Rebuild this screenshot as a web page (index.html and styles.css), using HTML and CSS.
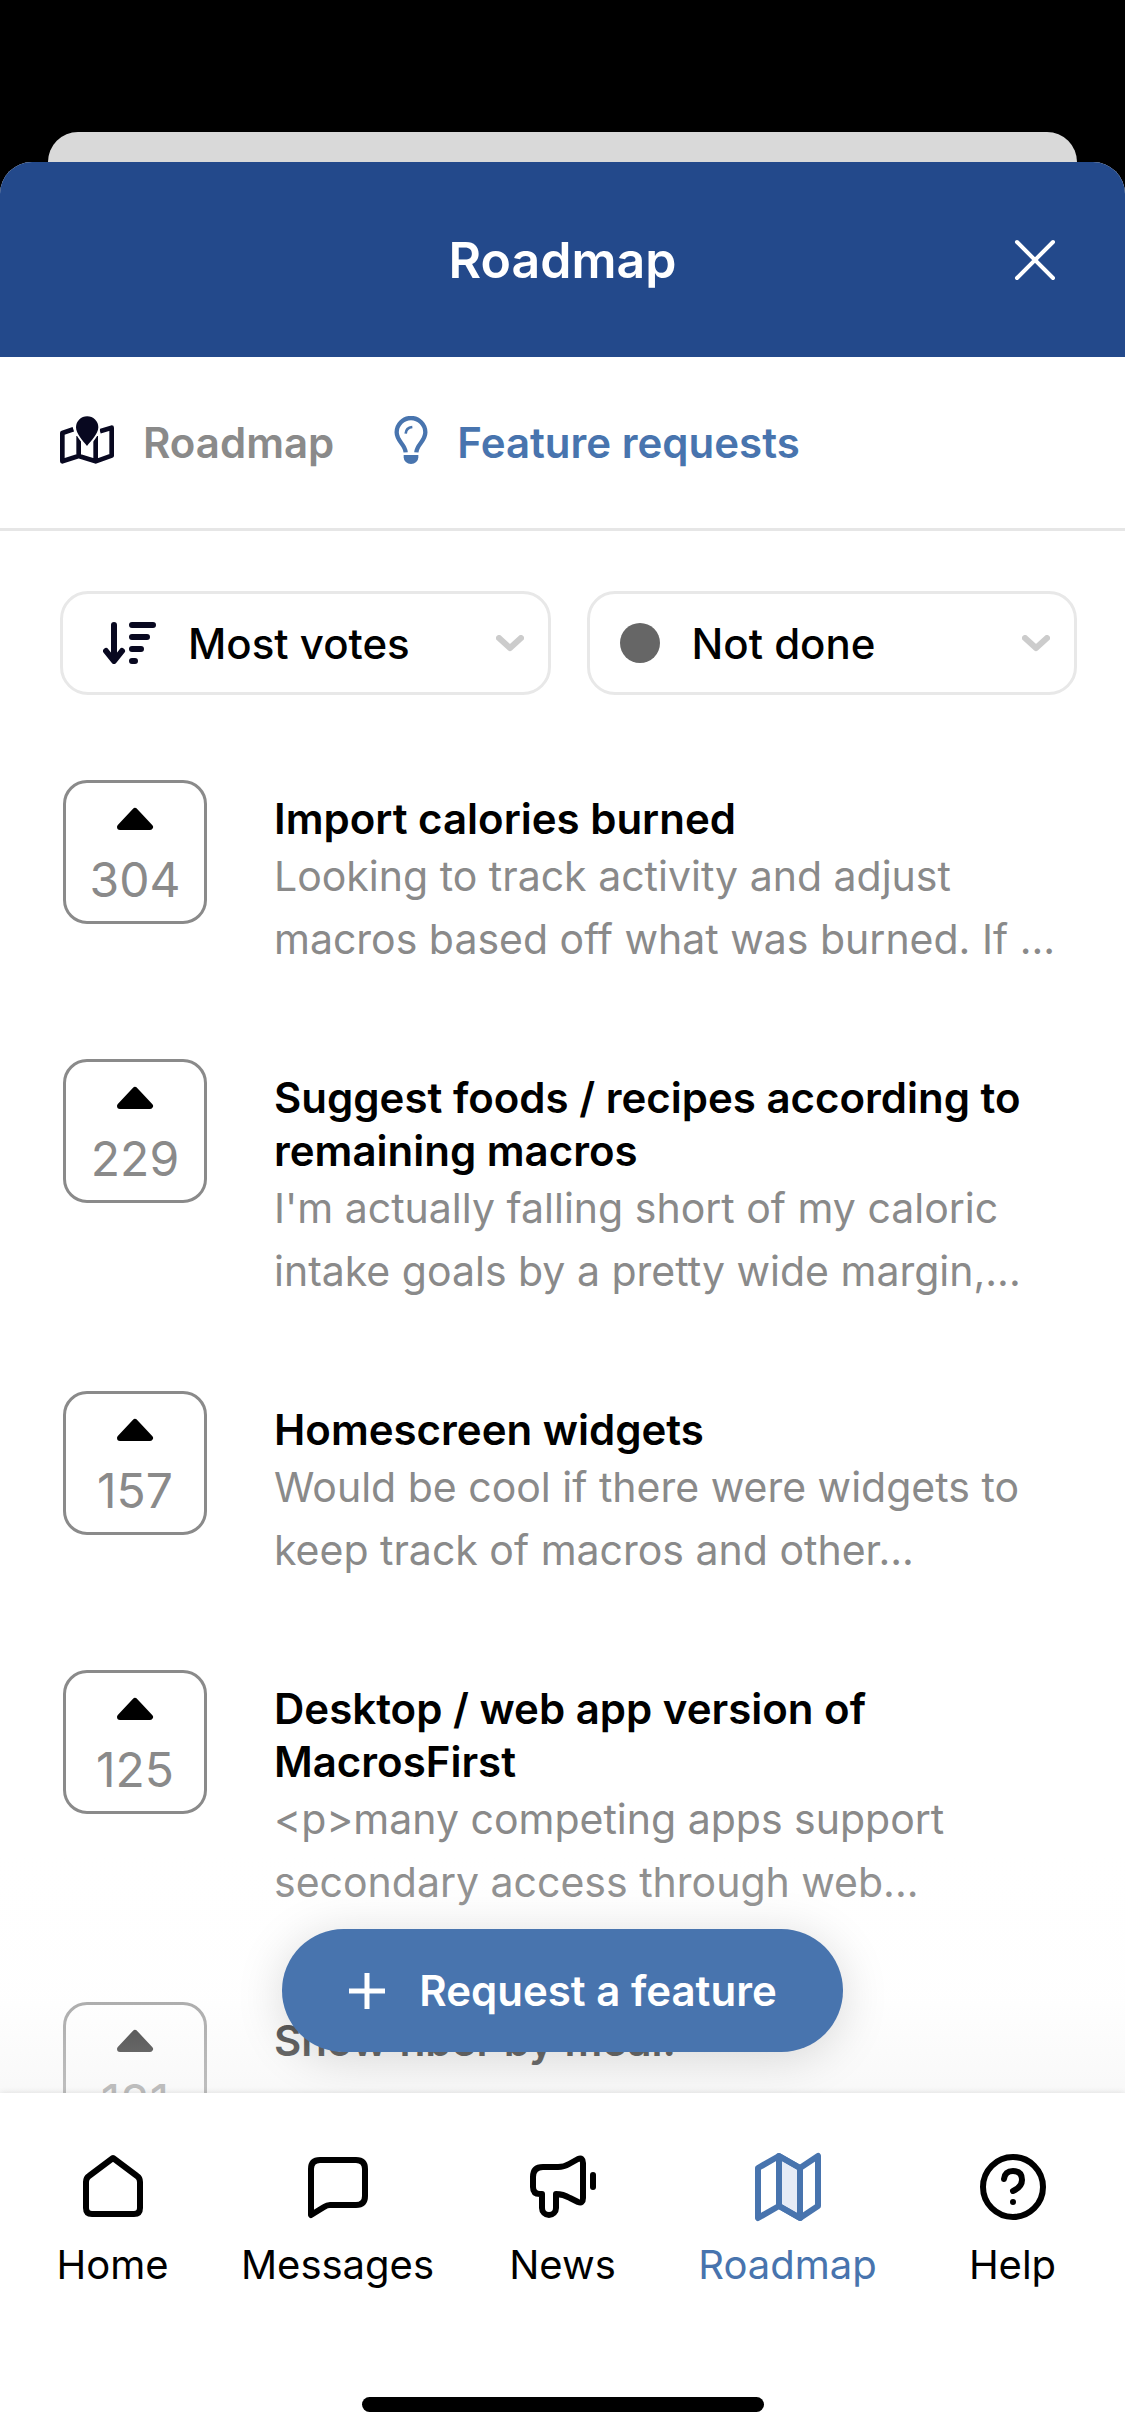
FILE: index.html
```html
<!DOCTYPE html>
<html lang="en">

<head>
    <meta charset="utf-8">
    <title>Roadmap</title>
    <meta name="viewport" content="width=device-width, initial-scale=1">

    <link rel="stylesheet" href="styles.css">
</head>

<body>
    <div class="backdrop"></div>

    <div class="sheet">
        <header class="header">
            <h1>Roadmap</h1>
            <button class="close" type="button" aria-label="Close">
                <svg width="42" height="42" viewBox="0 0 42 42" fill="none" stroke="currentColor" stroke-width="4" stroke-linecap="round">
                    <path d="M3 3L39 39M39 3L3 39" />
                </svg>
            </button>
        </header>

        <nav class="tabs">
            <a class="tab" href="#roadmap">
                <svg width="54" height="48" viewBox="0 0 162 144" fill="none" stroke="#080820" stroke-width="14" stroke-linejoin="round">
                    <path d="M40 40L7 51V136L56 120L107 136L155 119V35L120 46M56 60V120M107 60V136" />
                    <path d="M81 90C70 76 48 54 48 34a33 33 0 0 1 67 0C115 54 92 76 81 90z" fill="#080820" stroke="#fff" stroke-width="12" paint-order="stroke" />
                </svg>
                Roadmap
            </a>
            <a class="tab active" href="#requests">
                <svg width="34" height="48" viewBox="0 0 100 144" fill="none" stroke="currentColor" stroke-width="13">
                    <path d="M34 109C32 84 7 76 7 49a43 43 0 0 1 86 0C93 76 68 84 66 109" />
                    <path d="M34 53Q35 35 54 33" stroke-width="8" />
                    <path d="M28 117H72V124a22 20 0 0 1-44 0z" fill="currentColor" stroke="none" />
                </svg>
                Feature requests
            </a>
        </nav>

        <main class="content">
            <div class="filters">
                <label class="filter filter-sort">
                    <svg width="53" height="42" viewBox="0 0 53 42" fill="none" stroke="#080820" stroke-width="6" stroke-linecap="round" stroke-linejoin="round">
                        <path d="M11 3V38M3 29L11 39L19 29" />
                        <path d="M29 3H50M29 15H44M29 27H38M29 39H32" />
                    </svg>
                    <select aria-label="Sort by">
                        <option>Most votes</option>
                        <option>Newest</option>
                    </select>
                    <svg class="chevron" width="28" height="17" viewBox="0 0 28 17">
                        <path d="M3 3L14 13L25 3" />
                    </svg>
                </label>
                <label class="filter filter-status">
                    <span class="dot"></span>
                    <select aria-label="Status">
                        <option>Not done</option>
                        <option>Done</option>
                    </select>
                    <svg class="chevron" width="28" height="17" viewBox="0 0 28 17">
                        <path d="M3 3L14 13L25 3" />
                    </svg>
                </label>
            </div>

            <article class="item">
                <button class="vote" type="button">
                    <svg width="38" height="24" viewBox="0 0 38 24"><path d="M4 20L19 4L34 20z" /></svg>
                    304
                </button>
                <div class="text">
                    <h2>Import calories burned</h2>
                    <p>Looking to track activity and adjust macros based off what was burned. If ...</p>
                </div>
            </article>

            <article class="item">
                <button class="vote" type="button">
                    <svg width="38" height="24" viewBox="0 0 38 24"><path d="M4 20L19 4L34 20z" /></svg>
                    229
                </button>
                <div class="text">
                    <h2>Suggest foods / recipes according to remaining macros</h2>
                    <p>I'm actually falling short of my caloric intake goals by a pretty wide margin,...</p>
                </div>
            </article>

            <article class="item">
                <button class="vote" type="button">
                    <svg width="38" height="24" viewBox="0 0 38 24"><path d="M4 20L19 4L34 20z" /></svg>
                    157
                </button>
                <div class="text">
                    <h2>Homescreen widgets</h2>
                    <p>Would be cool if there were widgets to keep track of macros and other...</p>
                </div>
            </article>

            <article class="item">
                <button class="vote" type="button">
                    <svg width="38" height="24" viewBox="0 0 38 24"><path d="M4 20L19 4L34 20z" /></svg>
                    125
                </button>
                <div class="text">
                    <h2>Desktop / web app version of MacrosFirst</h2>
                    <p>&lt;p&gt;many competing apps support secondary access through web...</p>
                </div>
            </article>

            <article class="item">
                <button class="vote" type="button">
                    <svg width="38" height="24" viewBox="0 0 38 24"><path d="M4 20L19 4L34 20z" /></svg>
                    121
                </button>
                <div class="text">
                    <h2>Show fiber by meal!</h2>
                </div>
            </article>

            <div class="request-bar">
                <button class="request" type="button">
                    <svg width="38" height="38" viewBox="0 0 38 38" fill="none" stroke="currentColor" stroke-width="5">
                        <path d="M19 1V37M1 19H37" />
                    </svg>
                    Request a feature
                </button>
            </div>
        </main>

        <footer class="footer">
            <nav class="menu">
                <a href="#home">
                    <svg viewBox="0 0 72 72"><path d="M36 7L60 25Q63 27 63 31V57Q63 63 57 63H15Q9 63 9 57V31Q9 27 12 25z" /></svg>
                    Home
                </a>
                <a href="#messages">
                    <svg viewBox="0 0 72 72"><path d="M9 64V18Q9 9 18 9H54Q63 9 63 18V45Q63 54 54 54H28Q25 54 22 56z" /></svg>
                    Messages
                </a>
                <a href="#news">
                    <svg viewBox="0 0 72 72">
                        <path d="M15 43H13Q6 43 6 36V26Q6 16 16 16H31Q37 16 42 13L51 8Q56 6 56 12V47Q56 53 51 51L43 47Q36 43 29 43V57a7 7 0 0 1-14 0z" />
                        <path d="M66 24V36" />
                    </svg>
                    News
                </a>
                <a class="active" href="#roadmap">
                    <svg viewBox="0 0 72 72">
                        <path d="M27 5L48 17V67L27 55z" fill="#e6ebf6" />
                        <path d="M6 17L27 5L48 17L66 5V55L48 67L27 55L6 67z" />
                    </svg>
                    Roadmap
                </a>
                <a href="#help">
                    <svg viewBox="0 0 72 72">
                        <circle cx="36" cy="36" r="30" />
                        <path d="M27 28Q28 20 36 20Q45 20 45 29Q45 36 36 40M36 51V51.1" />
                    </svg>
                    Help
                </a>
            </nav>
            <div class="home-indicator"></div>
        </footer>
    </div>
</body>

</html>
```

FILE: styles.css
```css
* {
    box-sizing: border-box;
}

body {
    margin: 0;
    height: 100vh;
    padding-top: 132px;
    display: flex;
    flex-direction: column;
    overflow: hidden;
    background-color: #000;
    color: #000;
    font-family: Inter, "Liberation Sans", sans-serif;
    font-size: 42px;
}

h1, h2, p {
    margin: 0;
}

a {
    color: inherit;
    text-decoration: none;
}

button, select {
    font: inherit;
    color: inherit;
    background: none;
    border: none;
    padding: 0;
}

/* edge of the screen behind the sheet */
.backdrop {
    flex: none;
    height: 30px;
    margin: 0 48px;
    border-radius: 30px 30px 0 0;
    background-color: #d9d9d9;
}

.sheet {
    flex: 1;
    min-height: 0;
    display: flex;
    flex-direction: column;
    overflow: hidden;
    border-radius: 32px 32px 0 0;
    background-color: #fff;
}

.header {
    flex: none;
    display: grid;
    grid-template-columns: 1fr auto 1fr;
    align-items: center;
    height: 195px;
    padding: 0 69px;
    background-color: #23498b;
    color: #fff;
}

.header h1 {
    grid-column: 2;
    font-size: 50px;
    font-weight: 600;
}

.close {
    justify-self: end;
    display: flex;
}

.tabs {
    flex: none;
    display: flex;
    gap: 60px;
    height: 174px;
    padding: 52px 60px 0;
    border-bottom: 3px solid #e6e6e6;
    color: #8a8a8a;
    font-weight: 600;
    line-height: 68px;
}

.tab {
    display: flex;
    gap: 29px;
}

.tab svg {
    margin-top: 7px;
}

.active {
    color: #4874ae;
}

.content {
    position: relative;
    flex: 1;
    min-height: 0;
    overflow: hidden;
    padding: 60px 48px 0 60px;
}

.filters {
    display: grid;
    grid-template-columns: 1fr 1fr;
    gap: 36px;
    margin-bottom: 85px;
}

.filter {
    display: flex;
    align-items: center;
    height: 104px;
    padding: 0 24px;
    border: 3px solid #e8e8e8;
    border-radius: 28px;
    font-weight: 500;
}

.filter-sort {
    padding-left: 40px;
}

.filter-status {
    padding-left: 30px;
}

.filter select {
    flex: 1;
    min-width: 0;
    margin-left: 32px;
    appearance: none;
}

.dot {
    width: 40px;
    height: 40px;
    border-radius: 50%;
    background-color: #666;
}

.chevron {
    fill: none;
    stroke: #ccc;
    stroke-width: 6;
    stroke-linecap: round;
    stroke-linejoin: round;
}

.item {
    display: flex;
    align-items: flex-start;
    gap: 67px;
    margin-bottom: 88px;
    padding-left: 3px;
}

.vote {
    flex: none;
    display: flex;
    flex-direction: column;
    align-items: center;
    width: 144px;
    height: 144px;
    padding-top: 24px;
    border: 3px solid #8a8a8a;
    border-radius: 24px;
    color: #8a8a8a;
    font-size: 48px;
    line-height: 58px;
}

.vote svg {
    margin-bottom: 20px;
    fill: #000;
    stroke: #000;
    stroke-width: 6;
    stroke-linejoin: round;
}

.text {
    padding-top: 12px;
}

.text h2 {
    font-size: 42px;
    font-weight: 600;
    line-height: 53px;
}

.text p {
    color: #8a8a8a;
    font-size: 41px;
    line-height: 63px;
}

.request-bar {
    position: absolute;
    left: 0;
    right: 0;
    bottom: 0;
    display: flex;
    justify-content: center;
    padding: 76px 0 41px;
    background: linear-gradient(rgba(255, 255, 255, 0), rgba(253, 253, 253, 0.3) 60%, rgba(242, 242, 242, 0.5));
}

.request {
    display: flex;
    align-items: center;
    gap: 33px;
    height: 123px;
    padding: 0 66px;
    border-radius: 62px;
    background-color: #4874ae;
    box-shadow: 0 6px 48px rgba(0, 0, 0, 0.15);
    color: #fff;
    font-weight: 600;
}

.footer {
    position: relative;
    flex: none;
    padding: 58px 0 24px;
    background-color: #fff;
    box-shadow: 0 0 6px rgba(0, 0, 0, 0.12);
}

.menu {
    display: grid;
    grid-template-columns: repeat(5, 1fr);
    margin-bottom: 104px;
    font-size: 40px;
}

.menu a {
    display: flex;
    flex-direction: column;
    align-items: center;
    gap: 14px;
    line-height: 56px;
}

.menu svg {
    width: 72px;
    height: 72px;
    fill: none;
    stroke: currentColor;
    stroke-width: 6;
    stroke-linecap: round;
    stroke-linejoin: round;
}

.home-indicator {
    width: 402px;
    height: 15px;
    margin: 0 auto;
    border-radius: 8px;
    background-color: #000;
}
```
